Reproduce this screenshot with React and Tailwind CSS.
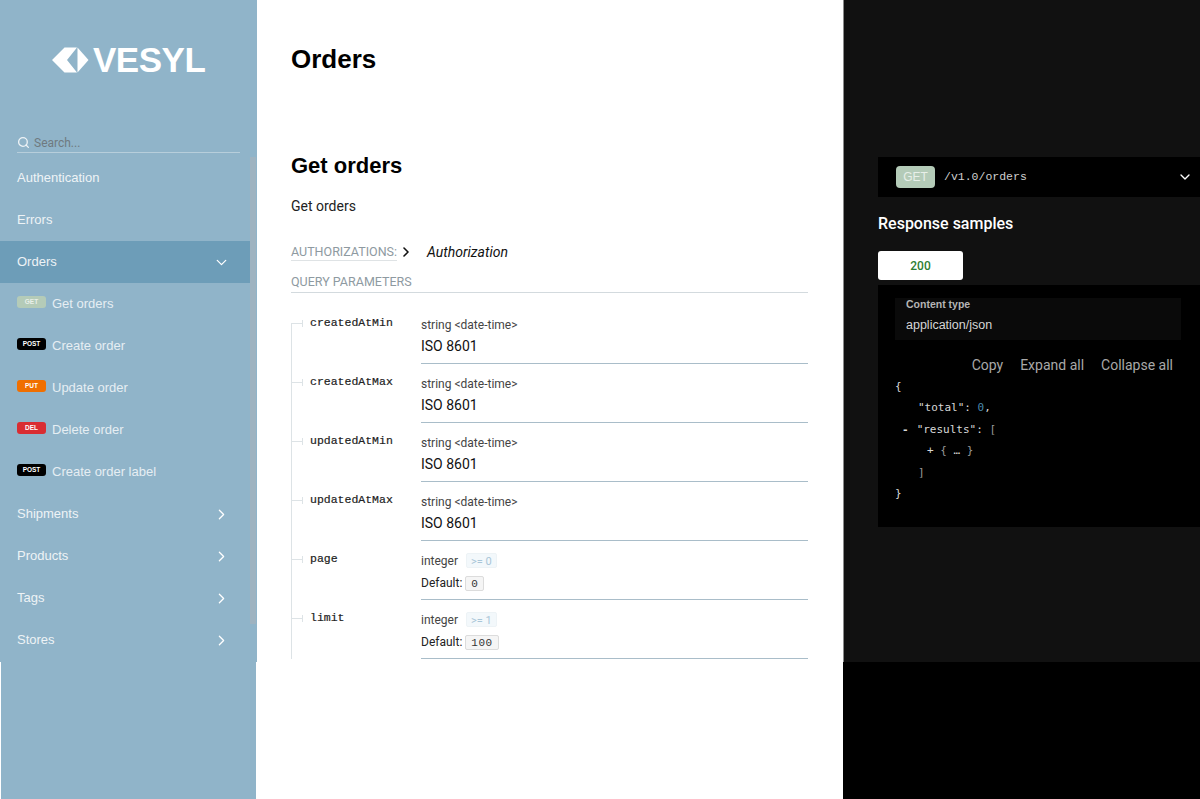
import { ChevronDown, ChevronRight, Search } from "lucide-react";

const sans = "font-['Liberation_Sans',Arial,sans-serif]";
const fira = "font-['Roboto','Noto_Sans',sans-serif]";

const methods = {
  GET: "bg-[#b4cbb8] text-[#e8efe9]",
  POST: "bg-black text-white",
  PUT: "bg-[#f06f00] text-white",
  DEL: "bg-[#d92d32] text-white",
};

const params = [
  { name: "createdAtMin", type: "string", format: "<date-time>", desc: "ISO 8601" },
  { name: "createdAtMax", type: "string", format: "<date-time>", desc: "ISO 8601" },
  { name: "updatedAtMin", type: "string", format: "<date-time>", desc: "ISO 8601" },
  { name: "updatedAtMax", type: "string", format: "<date-time>", desc: "ISO 8601" },
  { name: "page", type: "integer", min: ">= 0", def: "0" },
  { name: "limit", type: "integer", min: ">= 1", def: "100" },
];

function NavItem({ label, chevron, active }) {
  return (
    <div className={`h-[42px] flex items-center justify-between pl-[17px] pr-[20px] text-[13px] text-[#eef3f6] ${active ? "bg-[#6d9db8]" : ""}`}>
      <span>{label}</span>
      {chevron === "right" && <ChevronRight size={17} strokeWidth={1.8} className="text-white" />}
      {chevron === "down" && <ChevronDown size={17} strokeWidth={1.8} className="text-white" />}
    </div>
  );
}

function SubItem({ method, label }) {
  return (
    <div className="h-[42px] flex items-center pl-[17px] text-[13px] text-[#e6eef3]">
      <span className={`w-[29px] h-[12px] mr-[6px] -mt-[4px] rounded-[3px] flex items-center justify-center text-[6.5px] font-bold ${methods[method]}`}>
        {method}
      </span>
      <span>{label}</span>
    </div>
  );
}

function Param({ p, first }) {
  return (
    <div className="flex h-[59px]">
      <div className={`w-[130px] shrink-0 border-l border-[#dde3e6] ${first ? "mt-[18px]" : ""}`}>
        <div className={`flex items-center h-[10px] ${first ? "-mt-[5px]" : "mt-[13px]"}`}>
          <span className="w-[10px] h-px bg-[#dde3e6]" />
          <span className="w-px h-[7px] bg-[#dde3e6]" />
          <span className={`ml-[7px] font-['Liberation_Mono',monospace] text-[11.5px] text-[#222] [-webkit-text-stroke:0.2px]`}>
            {p.name}
          </span>
        </div>
      </div>
      <div className={`flex-1 border-b border-[#a9bdc9] pt-[12px] ${fira}`}>
        <div className="flex items-center h-[15px] text-[12px] text-[#444]">
          <span>{p.type}</span>
          {p.format && <span className="ml-[3px]">{p.format}</span>}
          {p.min && (
            <span className="ml-[8px] px-[4px] h-[15px] leading-[15px] rounded-[2px] bg-[#f3f8fb] border border-[#edf3f6] text-[11px] text-[#a9c6d8]">
              {p.min}
            </span>
          )}
        </div>
        {p.desc && <div className="mt-[4px] text-[14px] leading-[20px] text-[#111]">{p.desc}</div>}
        {p.def && (
          <div className="mt-[6px] flex items-center text-[12px] text-[#222]">
            <span>Default:</span>
            <span className="ml-[3px] px-[5px] h-[15px] leading-[14px] rounded-[2px] bg-[#f5f5f5] border border-[#dcdcdc] font-['Liberation_Mono',monospace] text-[11px] tracking-[0.5px] text-[#333]">
              {p.def}
            </span>
          </div>
        )}
      </div>
    </div>
  );
}

export default function App() {
  return (
    <div className={`w-[1200px] h-[799px] overflow-hidden bg-white flex flex-col ${sans}`}>
      <div className="h-[662px] flex shrink-0">
        <aside className="w-[257px] shrink-0 bg-[#90b4c9] relative">
          <div className="h-[133px] pt-[47px] pl-[52px] flex items-start">
            <svg width="37" height="26" viewBox="0 0 37 26" fill="white" className="shrink-0">
              <path d="M0 13 L12.5 0.5 H25 L25 0.5 L15 13 L25 25.5 H12.5 Z" />
              <path d="M25.5 0.5 L36.5 13 L25.5 25.5 Z" />
            </svg>
            <span className="ml-[4px] text-[35px] leading-[26px] font-bold tracking-[-0.5px] text-white">VESYL</span>
          </div>
          <div className="mx-[17px] w-[223px] h-[20px] flex items-center border-b border-[#b7cedb] mb-[4px]">
            <Search size={13} strokeWidth={2.4} className="text-[#eef3f6]" />
            <span className={`ml-[4px] text-[12px] text-[#6f7a80] ${fira}`}>Search...</span>
          </div>
          <div className="mr-[7px]">
            <NavItem label="Authentication" />
            <NavItem label="Errors" />
            <NavItem label="Orders" chevron="down" active />
            <SubItem method="GET" label="Get orders" />
            <SubItem method="POST" label="Create order" />
            <SubItem method="PUT" label="Update order" />
            <SubItem method="DEL" label="Delete order" />
            <SubItem method="POST" label="Create order label" />
            <NavItem label="Shipments" chevron="right" />
            <NavItem label="Products" chevron="right" />
            <NavItem label="Tags" chevron="right" />
            <NavItem label="Stores" chevron="right" />
          </div>
          <div className="absolute right-px top-[157px] w-[6px] h-[467px] bg-[#9fb3c0]" />
        </aside>

        <main className="w-[586px] shrink-0 pl-[34px] pr-[35px] overflow-hidden">
          <h1 className="mt-[43px] text-[26px] leading-[32px] font-bold text-black">Orders</h1>
          <h2 className="mt-[77px] text-[22px] leading-[28px] font-bold text-black">Get orders</h2>
          <p className={`mt-[16px] text-[14px] leading-[20px] text-[#222] ${fira}`}>Get orders</p>
          <div className={`mt-[26px] h-[20px] flex items-center ${fira}`}>
            <span className="text-[12.5px] text-[#8e9aa1] border-b border-[#dfe3e5] leading-[17px]">AUTHORIZATIONS:</span>
            <ChevronRight size={16} strokeWidth={2.4} className="ml-[1px] text-[#111]" />
            <span className="ml-[13px] text-[14px] italic text-[#111]">Authorization</span>
          </div>
          <div className={`mt-[11px] pb-[2px] text-[12.5px] leading-[17px] text-[#8e9aa1] border-b border-[#d3dade] ${fira}`}>
            QUERY PARAMETERS
          </div>
          <div className="mt-[12px]">
            {params.map((p, i) => (
              <Param key={p.name} p={p} first={i === 0} />
            ))}
          </div>
        </main>

        <section className={`flex-1 bg-[#111111] pl-[34px] pt-[157px] border-l border-[#8a8a8a] ${fira}`}>
          <div className="h-[40px] bg-black flex items-center pl-[18px] pr-[7px]">
            <span className={`w-[39px] h-[22px] rounded-[4px] bg-[#b4cbb8] flex items-center justify-center text-[12px] text-[#e8efe9] ${sans}`}>GET</span>
            <span className="ml-[9px] font-['Liberation_Mono',monospace] text-[11.5px] text-[#cfcfcf]">/v1.0/orders</span>
            <ChevronDown size={16} strokeWidth={2} className="ml-auto text-white" />
          </div>
          <h3 className="mt-[16px] text-[16px] leading-[22px] font-medium text-white">Response samples</h3>
          <div className="mt-[16px] w-[85px] h-[29px] rounded-[3px] bg-white flex items-center justify-center text-[12px] font-medium text-[#2e7d32]">
            200
          </div>
          <div className="mt-[5px] h-[242px] bg-black pt-[17px] pl-[17px] pr-[19px]">
            <div className={`h-[42px] bg-[#0a0a0a] pl-[11px] ${sans}`}>
              <div className="-mt-[4px] text-[10.5px] leading-[12px] font-bold text-[#b5b5b5] pt-0">Content type</div>
              <div className="mt-[7px] text-[12.5px] leading-[16px] text-[#d6d6d6]">application/json</div>
            </div>
            <div className="mt-[16px] flex justify-end gap-[17px] pr-[8px] text-[14px] leading-[18px] text-[#a8a8a8]">
              <span>Copy</span>
              <span>Expand all</span>
              <span>Collapse all</span>
            </div>
            <pre className="mt-[2px] font-['DejaVu_Sans_Mono',monospace] text-[11px] leading-[21.4px] text-[#d8d8d8]">
              <div>{"{"}</div>
              <div className="pl-[23px]">{'"total": '}<span className="text-[#4a88ad]">0</span>,</div>
              <div className="pl-[7px]"><span className="mr-[8px] font-bold">-</span>{'"results": '}<span className="text-[#999]">[</span></div>
              <div className="pl-[32px]">{"+ "}<span className="text-[#999]">{"{"}</span>{" … "}<span className="text-[#999]">{"}"}</span></div>
              <div className="pl-[23px] text-[#999]">]</div>
              <div>{"}"}</div>
            </pre>
          </div>
        </section>
      </div>

      <div className="flex-1 flex">
        <div className="w-px bg-white" />
        <div className="w-[255px] bg-[#90b4c9]" />
        <div className="w-[587px] bg-white" />
        <div className="flex-1 bg-black" />
      </div>
    </div>
  );
}
